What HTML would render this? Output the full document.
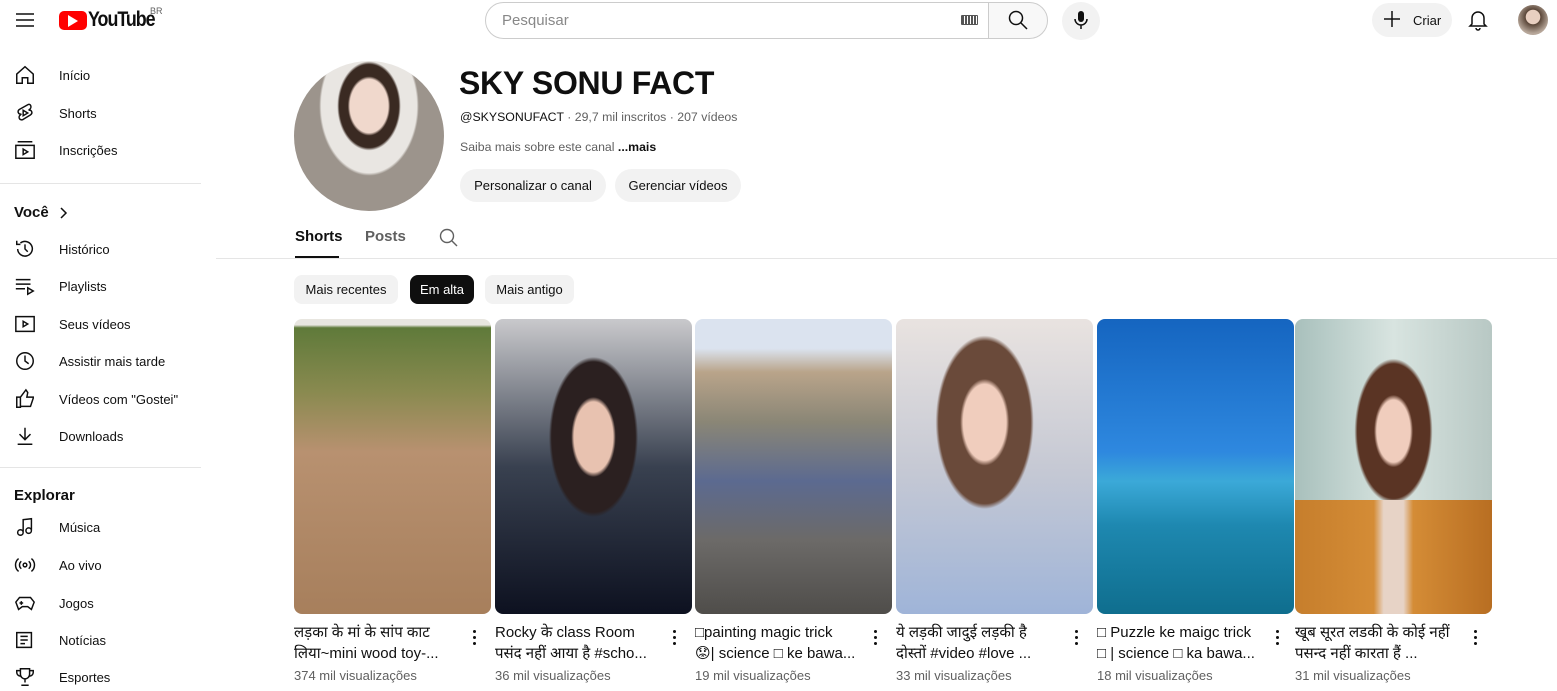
<!DOCTYPE html>
<html><head><meta charset="utf-8"><style>
*{margin:0;padding:0;box-sizing:border-box}
body{width:1557px;height:691px;overflow:hidden;background:#fff;font-family:"Liberation Sans","Noto Sans CJK SC",sans-serif;color:#0f0f0f;position:relative}
.a{position:absolute}
.si{position:absolute;left:14px;display:flex;align-items:center;font-size:13px}
.si svg{width:22px;height:22px;margin-right:23px;fill:none;stroke:#0f0f0f;stroke-width:1.6}
.hr{position:absolute;left:0;width:201px;height:1px;background:#e5e5e5}
.th{position:absolute;top:319px;width:197px;height:295px;border-radius:8px;overflow:hidden}
.tt{position:absolute;top:622px;width:165px;font-size:15px;line-height:21px;white-space:nowrap;overflow:hidden;font-family:"Liberation Sans","Noto Sans CJK SC","DejaVu Sans",sans-serif}
.vw{position:absolute;top:668px;font-size:13px;color:#606060}
.dots{position:absolute;top:630px;width:4px}
.dots i{display:block;width:3px;height:3px;background:#0f0f0f;border-radius:50%;margin-bottom:3px}
.chip{position:absolute;top:275px;height:29px;border-radius:8px;background:#f2f2f2;font-size:13px;display:flex;align-items:center;justify-content:center}
.btn{position:absolute;top:169px;height:33px;border-radius:17px;background:#f2f2f2;font-size:13px;display:flex;align-items:center;justify-content:center}
</style></head><body>
<svg class="a" style="left:15px;top:12px" width="20" height="16"><path d="M1 2h18M1 8h18M1 14h18" stroke="#0f0f0f" stroke-width="1.5"/></svg>
<div class="a" style="left:59px;top:11px;width:28px;height:19px;background:#f00;border-radius:5px"></div>
<svg class="a" style="left:68px;top:15px" width="11" height="12"><path d="M0 0L10 6 0 12z" fill="#fff"/></svg>
<div class="a" style="left:88px;top:8px;font-size:21px;font-weight:bold;letter-spacing:-1.2px;transform:scaleX(.85);transform-origin:left">YouTube</div>
<div class="a" style="left:150px;top:6px;font-size:9px;color:#606060">BR</div>
<div class="a" style="left:485px;top:2px;width:504px;height:37px;border:1px solid #ccc;border-radius:19px 0 0 19px;font-size:15px;color:#888;padding:9px 16px">Pesquisar</div>
<div class="a" style="left:961px;top:15px;width:17px;height:10px;border:1px solid #555;border-radius:1px;background:repeating-linear-gradient(90deg,#555 0 2px,#fff 2px 3px)"></div>
<div class="a" style="left:988px;top:2px;width:60px;height:37px;border:1px solid #ccc;border-radius:0 19px 19px 0;background:#f8f8f8"></div>
<svg class="a" style="left:1008px;top:10px" width="20" height="20"><circle cx="8" cy="8" r="6.5" fill="none" stroke="#0f0f0f" stroke-width="1.5"/><path d="M13 13l6 6" stroke="#0f0f0f" stroke-width="1.5"/></svg>
<div class="a" style="left:1062px;top:2px;width:38px;height:38px;border-radius:50%;background:#f2f2f2"></div>
<svg class="a" style="left:1073px;top:10px" width="16" height="20"><rect x="5" y="1" width="6" height="11" rx="3" fill="#0f0f0f"/><path d="M2 9a6 6 0 0 0 12 0M8 15v4" stroke="#0f0f0f" stroke-width="1.5" fill="none"/></svg>
<div class="a" style="left:1372px;top:3px;width:80px;height:34px;border-radius:17px;background:#f2f2f2;font-size:13px;padding:10px 0 0 41px">Criar</div>
<svg class="a" style="left:1383px;top:10px" width="18" height="18"><path d="M9 1v16M1 9h16" stroke="#0f0f0f" stroke-width="1.5"/></svg>
<svg class="a" style="left:1468px;top:9px" width="20" height="22"><path d="M4 15V9a6 6 0 0 1 12 0v6l2 2H2zM8 19a2 2 0 0 0 4 0" fill="none" stroke="#0f0f0f" stroke-width="1.5"/></svg>
<div class="a" style="left:1518px;top:5px;width:30px;height:30px;border-radius:50%;background:radial-gradient(circle at 50% 40%,#e8cfc0 30%,#5a4638 32%,#b7a79a 70%)"></div>
<div class="si" style="top:64px"><svg viewBox="0 0 24 24"><path d="M3 11L12 3l9 8v10h-6v-6H9v6H3z"/></svg>Início</div>
<div class="si" style="top:102px"><svg viewBox="0 0 24 24"><path d="M15 3L6 8c-3 2-1 6 2 5l-1 1c-3 2-1 7 3 5l8-5c3-2 1-6-2-5l1-1c3-2 1-7-2-5zM10 9v6l5-3z"/></svg>Shorts</div>
<div class="si" style="top:139px"><svg viewBox="0 0 24 24"><path d="M4 3h16M2 7h20v14H2zM10 11v6l5-3z"/></svg>Inscrições</div>
<div class="hr" style="top:183px"></div>
<div class="a" style="left:14px;top:204px;font-size:15px;font-weight:bold">Você</div>
<svg class="a" style="left:59px;top:207px" width="10" height="12"><path d="M2 1l5 5-5 5" fill="none" stroke="#0f0f0f" stroke-width="1.5"/></svg>
<div class="si" style="top:238px"><svg viewBox="0 0 24 24"><path d="M4 12a8 8 0 1 0 3-6.5M3 3v4h4M12 7v5l3 3"/></svg>Histórico</div>
<div class="si" style="top:275px"><svg viewBox="0 0 24 24"><path d="M2 5h16M2 10h16M2 15h10M15 14v7l6-3.5z"/></svg>Playlists</div>
<div class="si" style="top:313px"><svg viewBox="0 0 24 24"><path d="M2 4h20v16H2zM10 9v6l5-3z"/></svg>Seus vídeos</div>
<div class="si" style="top:350px"><svg viewBox="0 0 24 24"><circle cx="12" cy="12" r="9"/><path d="M12 6v6l4 3"/></svg>Assistir mais tarde</div>
<div class="si" style="top:388px"><svg viewBox="0 0 24 24"><path d="M3 10h4v11H3zM7 20h11l3-9v-1h-7l1-5-2-3-6 8"/></svg>Vídeos com "Gostei"</div>
<div class="si" style="top:425px"><svg viewBox="0 0 24 24"><path d="M12 3v13M6 10l6 6 6-6M4 21h16"/></svg>Downloads</div>
<div class="hr" style="top:467px"></div>
<div class="a" style="left:14px;top:487px;font-size:15px;font-weight:bold">Explorar</div>
<div class="si" style="top:516px"><svg viewBox="0 0 24 24"><path d="M10 17V4l9-1v12"/><circle cx="7" cy="18" r="3"/><circle cx="16" cy="16" r="3"/></svg>Música</div>
<div class="si" style="top:554px"><svg viewBox="0 0 24 24"><circle cx="12" cy="12" r="2"/><path d="M8 8a5 5 0 0 0 0 8M16 8a5 5 0 0 1 0 8M5 5a9 9 0 0 0 0 14M19 5a9 9 0 0 1 0 14"/></svg>Ao vivo</div>
<div class="si" style="top:592px"><svg viewBox="0 0 24 24"><path d="M6 6h12l4 5-3 8-4-3H9l-4 3-3-8zM8 10v4M6 12h4"/></svg>Jogos</div>
<div class="si" style="top:629px"><svg viewBox="0 0 24 24"><path d="M3 4h16v16H3zM7 8h8M7 12h8M7 16h5"/></svg>Notícias</div>
<div class="si" style="top:666px"><svg viewBox="0 0 24 24"><path d="M7 3h10v6a5 5 0 0 1-10 0zM7 5H3v2a4 4 0 0 0 4 4M17 5h4v2a4 4 0 0 1-4 4M12 14v4M8 21h8"/></svg>Esportes</div>
<div class="a" style="left:294px;top:61px;width:150px;height:150px;border-radius:50%;background:radial-gradient(ellipse at 50% 30%,#f0d8cc 0 18%,#3a2a22 20% 28%,#e9e6e2 30% 45%,#9c948c 47% 100%)"></div>
<div class="a" style="left:459px;top:65px;font-size:32px;font-weight:bold;letter-spacing:-.3px">SKY SONU FACT</div>
<div class="a" style="left:460px;top:110px;font-size:12.3px;color:#606060"><span style="color:#0f0f0f">@SKYSONUFACT</span> · 29,7 mil inscritos · 207 vídeos</div>
<div class="a" style="left:460px;top:140px;font-size:12.3px;color:#606060">Saiba mais sobre este canal <b style="color:#0f0f0f">...mais</b></div>
<div class="btn" style="left:460px;width:146px">Personalizar o canal</div>
<div class="btn" style="left:615px;width:126px">Gerenciar vídeos</div>
<div class="a" style="left:295px;top:228px;font-size:15px;font-weight:bold">Shorts</div>
<div class="a" style="left:295px;top:256px;width:44px;height:2px;background:#0f0f0f"></div>
<div class="a" style="left:365px;top:228px;font-size:15px;font-weight:bold;color:#606060">Posts</div>
<svg class="a" style="left:438px;top:227px" width="20" height="20"><circle cx="9" cy="9" r="6.5" fill="none" stroke="#606060" stroke-width="1.4"/><path d="M14 14l5 5" stroke="#606060" stroke-width="1.4"/></svg>
<div class="a" style="left:216px;top:258px;width:1341px;height:1px;background:#e5e5e5"></div>
<div class="chip" style="left:294px;width:104px">Mais recentes</div>
<div class="chip" style="left:410px;width:64px;background:#0f0f0f;color:#fff">Em alta</div>
<div class="chip" style="left:485px;width:89px">Mais antigo</div>
<div class="th" style="left:294px;background:linear-gradient(#e8e6e0 0 2%,#5f7a3a 3%,#8a8a50 25%,#b89170 45%,#a77f5c 100%)"></div>
<div class="th" style="left:495px;background:radial-gradient(ellipse at 50% 40%,#e8c2b0 0 14%,#2b2020 16% 30%,transparent 32%),linear-gradient(#c9c9cc,#394150 50%,#0d1120)"></div>
<div class="th" style="left:695px;background:linear-gradient(#dbe3ef 0 10%,#b9a48a 18%,#8a8676 35%,#5c6a90 55%,#6c6a68 75%,#4f4d4a)"></div>
<div class="th" style="left:896px;background:radial-gradient(ellipse at 45% 35%,#f0cdbd 0 14%,#6a4a3a 16% 30%,transparent 32%),linear-gradient(#e9e3e0,#c6c9d4 50%,#9fb4d8)"></div>
<div class="th" style="left:1097px;background:linear-gradient(#1565c0 0,#2e88df 45%,#3ba9d8 55%,#1e88b0 70%,#0f6e8e)"></div>
<div class="th" style="left:1295px;background:radial-gradient(ellipse at 50% 38%,#f0cdbd 0 12%,#5a3424 14% 26%,transparent 28%),linear-gradient(90deg,#a8c0bc,#d8e4e0 50%,#b8c8c4)"></div>
<div class="a" style="left:1295px;top:500px;width:197px;height:114px;border-radius:0 0 8px 8px;background:linear-gradient(90deg,#c67e2c,#d48c36 40%,#e7d3c6 45% 55%,#d48c36 60%,#b86e22)"></div>
<div class="tt" style="left:294px">लड़का के मां के सांप काट<br>लिया~mini wood toy-...</div>
<div class="tt" style="left:495px">Rocky के class Room<br>पसंद नहीं आया है #scho...</div>
<div class="tt" style="left:695px">□painting magic trick<br>😟| science □ ke bawa...</div>
<div class="tt" style="left:896px">ये लड़की जादुई लड़की है<br>दोस्तों #video #love ...</div>
<div class="tt" style="left:1097px">□ Puzzle ke maigc trick<br>□ | science □ ka bawa...</div>
<div class="tt" style="left:1295px">खूब सूरत लडकी के कोई नहीं<br>पसन्द नहीं कारता हैं ...</div>
<div class="dots" style="left:473px"><i></i><i></i><i></i></div>
<div class="dots" style="left:673px"><i></i><i></i><i></i></div>
<div class="dots" style="left:874px"><i></i><i></i><i></i></div>
<div class="dots" style="left:1075px"><i></i><i></i><i></i></div>
<div class="dots" style="left:1276px"><i></i><i></i><i></i></div>
<div class="dots" style="left:1474px"><i></i><i></i><i></i></div>
<div class="vw" style="left:294px">374 mil visualizações</div>
<div class="vw" style="left:495px">36 mil visualizações</div>
<div class="vw" style="left:695px">19 mil visualizações</div>
<div class="vw" style="left:896px">33 mil visualizações</div>
<div class="vw" style="left:1097px">18 mil visualizações</div>
<div class="vw" style="left:1295px">31 mil visualizações</div>
</body></html>
